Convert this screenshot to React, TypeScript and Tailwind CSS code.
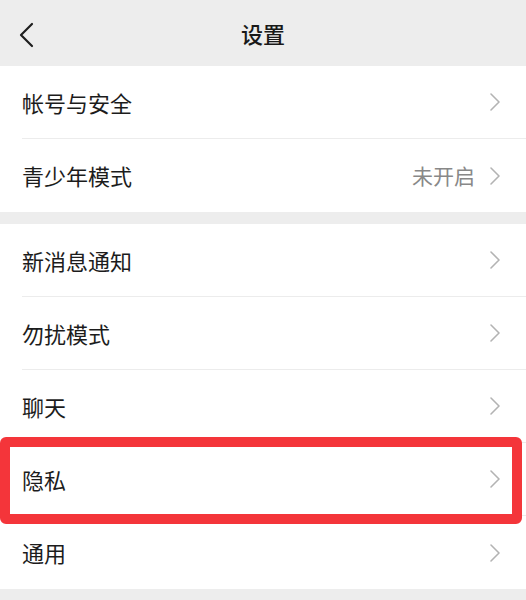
type Item = { label: string; value?: string; highlight?: boolean }

const groups: Item[][] = [
  [{ label: '帐号与安全' }, { label: '青少年模式', value: '未开启' }],
  [
    { label: '新消息通知' },
    { label: '勿扰模式' },
    { label: '聊天' },
    { label: '隐私', highlight: true },
    { label: '通用' },
  ],
]

function Arrow() {
  return (
    <svg width="12" height="20" viewBox="0 0 12 20" fill="none" className="text-[#b3b3b3]">
      <path d="M2 2 L10 10 L2 18" stroke="currentColor" strokeWidth="1.6" strokeLinecap="round" strokeLinejoin="round" />
    </svg>
  )
}

function Row({ item, last }: { item: Item; last: boolean }) {
  return (
    <div className="relative bg-white pl-[22px]">
      <div
        className={`flex h-[73px] items-center pr-[25px] ${last ? '' : 'border-b border-[#ececec]'}`}
      >
        <span className="flex-1 text-[22px] text-[#1c1c1c]">{item.label}</span>
        {item.value && <span className="mr-[14px] text-[21px] text-[#888888]">{item.value}</span>}
        <Arrow />
      </div>
      {item.highlight && (
        <div className="pointer-events-none absolute left-0 top-[-6px] z-10 h-[87px] w-[522px] rounded-[6px] border-[10px] border-[#f4353a]" />
      )}
    </div>
  )
}

export default function App() {
  return (
    <div className="h-[600px] w-[526px] overflow-hidden bg-[#ededed] font-['Noto_Sans_CJK_SC',sans-serif]">
      <div className="relative flex h-[66px] items-center justify-center">
        <svg width="18" height="26" viewBox="0 0 18 26" fill="none" className="absolute left-[17px] top-[22px] text-[#1f1f1f]">
          <path d="M15 2 L4 13 L15 24" stroke="currentColor" strokeWidth="2.2" strokeLinecap="round" strokeLinejoin="round" />
        </svg>
        <span className="text-[22px] font-medium text-[#191919]">设置</span>
      </div>
      <div className="flex flex-col gap-[12px]">
        {groups.map((g, gi) => (
          <div key={gi} className="flex flex-col">
            {g.map((item, i) => (
              <Row key={item.label} item={item} last={i === g.length - 1} />
            ))}
          </div>
        ))}
      </div>
    </div>
  )
}
